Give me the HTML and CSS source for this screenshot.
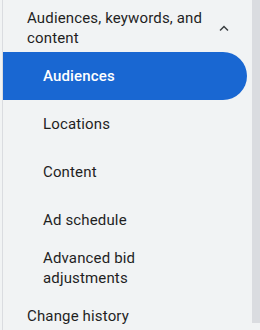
FILE: index.html
```html
<!DOCTYPE html>
<html lang="en">
<head>
    <meta charset="UTF-8">
    <meta name="viewport" content="width=device-width, initial-scale=1.0">
    <title>Campaign menu</title>
    <link rel="stylesheet" href="styles.css">
</head>
<body>
    <div class="page">
        <nav class="nav">
            <div class="section-head">
                <span class="section-title">Audiences, keywords, and content</span>
                <svg class="chevron" width="18" height="18" viewBox="0 0 24 24">
                    <path d="M6.7 15.4L12 10.1l5.3 5.3" fill="none" stroke="currentColor" stroke-width="2"/>
                </svg>
            </div>
            <a class="nav-item active" href="#">Audiences</a>
            <a class="nav-item" href="#">Locations</a>
            <a class="nav-item" href="#">Content</a>
            <a class="nav-item" href="#">Ad schedule</a>
            <a class="nav-item" href="#">Advanced bid<br>adjustments</a>
            <a class="nav-top" href="#">Change history</a>
        </nav>
        <div class="scroll">
            <div class="thumb"></div>
        </div>
    </div>
</body>
</html>
```

FILE: styles.css
```css
body {
    margin: 0;
    font-family: Roboto, "Noto Sans", sans-serif;
    font-size: 15px;
    line-height: 20px;
    letter-spacing: 0.15px;
    color: #1f1f1f;
    background: #f1f3f4;
    overflow: hidden;
}
.page {
    display: flex;
    height: 330px;
    padding-left: 2px;
}
.nav {
    flex: 1;
    display: flex;
    flex-direction: column;
    border-left: 1px solid #dadce0;
    background: #f1f3f4;
    padding-right: 5px;
}
.section-head {
    display: flex;
    align-items: center;
    padding: 8px 14px 4px 24px;
}
.section-title {
    flex: 1;
}
.chevron {
    color: #3c4043;
    margin-top: -1px;
}
.nav-item,
.nav-top {
    display: flex;
    align-items: center;
    min-height: 48px;
    padding: 4px 0 4px 40px;
    box-sizing: border-box;
    color: #1f1f1f;
    text-decoration: none;
}
.nav-top {
    padding-left: 24px;
}
.nav-item.active {
    background: #1967d2;
    color: white;
    font-weight: 500;
    border-radius: 0 24px 24px 0;
}
.scroll {
    width: 8px;
    background: #f1f3f4;
}
.thumb {
    height: 323px;
    background: #dadce0;
}
```
